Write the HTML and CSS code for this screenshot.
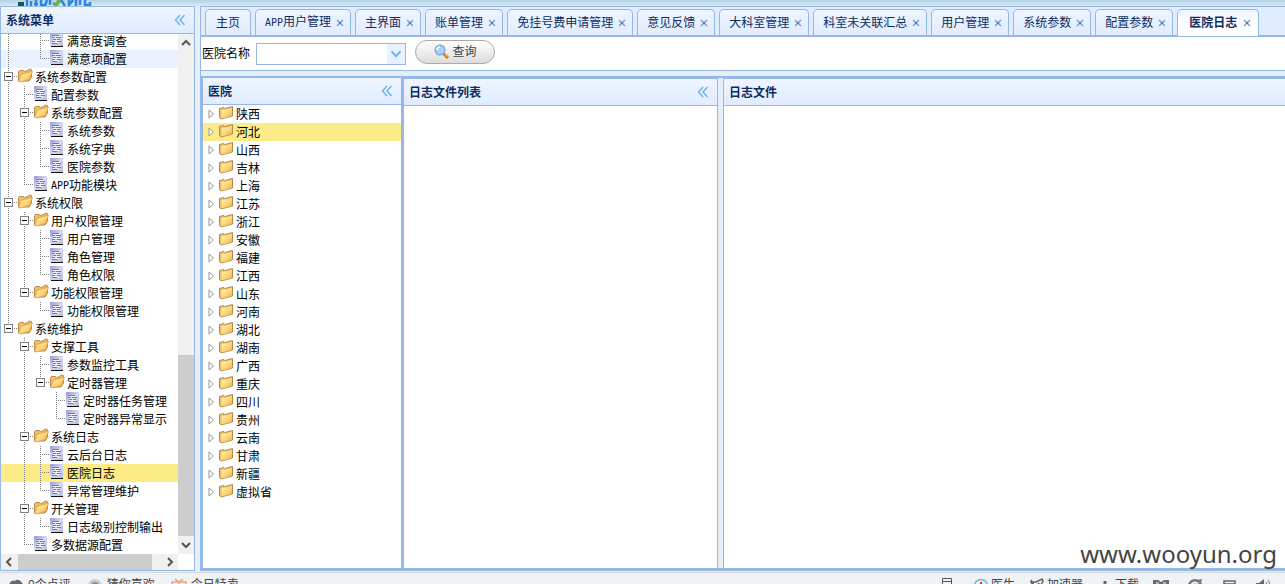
FILE: index.html
```html
<!DOCTYPE html>
<html lang="zh-CN">
<head>
<meta charset="utf-8">
<title>医院日志</title>
<link rel="stylesheet" href="styles.css">
</head>
<body>
<svg class="defs" aria-hidden="true">
  <defs>
    <linearGradient id="gold" x1="0" y1="0" x2="1" y2="1"><stop offset="0" stop-color="#fff2b8"/><stop offset=".5" stop-color="#fcd97c"/><stop offset="1" stop-color="#f2a93a"/></linearGradient>
    <linearGradient id="page" x1="0" y1="0" x2="1" y2="1"><stop offset="0" stop-color="#9a9ad4"/><stop offset=".5" stop-color="#d4d8f0"/><stop offset="1" stop-color="#b8bce0"/></linearGradient>
  </defs>
  <symbol id="open" viewBox="0 0 16 16"><path d="M1.500 13V3.500L2.500 2.500H6L7.500 3.500L11 2.500L12 1L14.500 1.500V9L12 13Z" fill="#f3bd62" stroke="#c08a48"/><path d="M1.500 13.500L4.500 6L7 5.500L15.500 3L12.500 11.500L3 14Z" fill="url(#gold)" stroke="#d39a4c" stroke-width=".7"/></symbol>
  <symbol id="shut" viewBox="0 0 16 16"><path d="M1.500 3.500L6 2.500L7 3.500L14.500 1.500V11L3 14L1.500 12Z" fill="#f3c068" stroke="#b08a55"/><path d="M3.500 5L8 4.500L14 3V11L3.500 13.500Z" fill="url(#gold)"/></symbol>
  <symbol id="doc" viewBox="0 0 13 16"><g shape-rendering="crispEdges"><path d="M0 0H13V14H0Z" fill="url(#page)"/><path d="M1 14H13V15H1Z" fill="#111"/><path d="M2 3.500H9M2 5.500H5M6 5.500H11M3 7.500H6M7 7.500H10M2 9.500H5M7 9.500H11M2 11.500H7" stroke="#7478a4"/><path d="M3 4.500H10M3 6.500H9M3 8.500H10M3 10.500H9" stroke="#f0f2ff"/></g></symbol>
  <symbol id="fold" viewBox="0 0 12 12"><path d="M6 1L1.500 6L6 11M10.500 1L6 6L10.500 11" fill="none" stroke="#6db4ee" stroke-width="1.500"/></symbol>
  <symbol id="x" viewBox="0 0 8 8"><path d="M1 1L7 7M7 1L1 7" stroke="#7f9fce" stroke-width="1.500"/><path d="M3 3H5V5H3Z" fill="#5577b0"/></symbol>
  <symbol id="chev" viewBox="0 0 10 10"><path d="M1 7L5 3L9 7" fill="none" stroke="#555" stroke-width="2"/></symbol>
  <symbol id="tri" viewBox="0 0 7 10"><path d="M1 1L5.500 5L1 9Z" fill="#fff" stroke="#999"/></symbol>
</svg>
<header class="banner">
  <svg class="logo" viewBox="0 0 74 6"><path d="M0 2H6V6H0Z" fill="#24504c"/><path d="M9 0V6M13 1V6M16 4H20M18 0V6M23 0V5H27M29 0L27 6M32 0V5M35 3L39 6" fill="none" stroke="#2b86e4" stroke-width="2.500"/><path d="M37 6L42 0" stroke="#6fb92c" stroke-width="4"/><path d="M43 0L47 6M51 0V6M55 0L52 4M58 0V6M62 0V5M67 0V5H72V2" fill="none" stroke="#2b86e4" stroke-width="2.500"/></svg>
</header>
<div class="desk">
  <aside class="side">
    <div class="head"><h2>系统菜单</h2><button class="ico" aria-label="折叠"><svg><use href="#fold"/></svg></button></div>
    <div class="scroller">
      <nav class="view">
        <ul class="tree">
          <li><ul><li class="above"><ul>
            <li><div class="row leaf"><svg><use href="#doc"/></svg>满意度调查</div></li>
            <li><div class="row leaf hover"><svg><use href="#doc"/></svg>满意项配置</div></li>
          </ul></li></ul></li>
          <li><div class="row"><i></i><svg><use href="#open"/></svg>系统参数配置</div><ul>
            <li><div class="row leaf"><svg><use href="#doc"/></svg>配置参数</div></li>
            <li><div class="row"><i></i><svg><use href="#open"/></svg>系统参数配置</div><ul>
              <li><div class="row leaf"><svg><use href="#doc"/></svg>系统参数</div></li>
              <li><div class="row leaf"><svg><use href="#doc"/></svg>系统字典</div></li>
              <li><div class="row leaf"><svg><use href="#doc"/></svg>医院参数</div></li>
            </ul></li>
            <li><div class="row leaf"><svg><use href="#doc"/></svg><span class="latin">APP</span>功能模块</div></li>
          </ul></li>
          <li><div class="row"><i></i><svg><use href="#open"/></svg>系统权限</div><ul>
            <li><div class="row"><i></i><svg><use href="#open"/></svg>用户权限管理</div><ul>
              <li><div class="row leaf"><svg><use href="#doc"/></svg>用户管理</div></li>
              <li><div class="row leaf"><svg><use href="#doc"/></svg>角色管理</div></li>
              <li><div class="row leaf"><svg><use href="#doc"/></svg>角色权限</div></li>
            </ul></li>
            <li><div class="row"><i></i><svg><use href="#open"/></svg>功能权限管理</div><ul>
              <li><div class="row leaf"><svg><use href="#doc"/></svg>功能权限管理</div></li>
            </ul></li>
          </ul></li>
          <li><div class="row"><i></i><svg><use href="#open"/></svg>系统维护</div><ul>
            <li><div class="row"><i></i><svg><use href="#open"/></svg>支撑工具</div><ul>
              <li><div class="row leaf"><svg><use href="#doc"/></svg>参数监控工具</div></li>
              <li><div class="row"><i></i><svg><use href="#open"/></svg>定时器管理</div><ul>
                <li><div class="row leaf"><svg><use href="#doc"/></svg>定时器任务管理</div></li>
                <li><div class="row leaf"><svg><use href="#doc"/></svg>定时器异常显示</div></li>
              </ul></li>
            </ul></li>
            <li><div class="row"><i></i><svg><use href="#open"/></svg>系统日志</div><ul>
              <li><div class="row leaf"><svg><use href="#doc"/></svg>云后台日志</div></li>
              <li><div class="row leaf picked"><svg><use href="#doc"/></svg>医院日志</div></li>
              <li><div class="row leaf"><svg><use href="#doc"/></svg>异常管理维护</div></li>
            </ul></li>
            <li><div class="row"><i></i><svg><use href="#open"/></svg>开关管理</div><ul>
              <li><div class="row leaf"><svg><use href="#doc"/></svg>日志级别控制输出</div></li>
            </ul></li>
            <li><div class="row leaf"><svg><use href="#doc"/></svg>多数据源配置</div></li>
          </ul></li>
        </ul>
      </nav>
      <div class="vbar"><svg><use href="#chev"/></svg><span class="track"><span class="thumb"></span></span><svg class="down"><use href="#chev"/></svg></div>
      <div class="hbar"><svg class="left"><use href="#chev"/></svg><span class="track"><span class="thumb"></span></span><svg class="right"><use href="#chev"/></svg></div>
    </div>
  </aside>
  <main class="work">
    <div class="tabs" role="tablist">
      <div class="tab"><a href="#">主页</a></div>
      <div class="tab"><a href="#"><span class="latin">APP</span>用户管理</a><button class="x" aria-label="关闭"><svg><use href="#x"/></svg></button></div>
      <div class="tab"><a href="#">主界面</a><button class="x" aria-label="关闭"><svg><use href="#x"/></svg></button></div>
      <div class="tab"><a href="#">账单管理</a><button class="x" aria-label="关闭"><svg><use href="#x"/></svg></button></div>
      <div class="tab"><a href="#">免挂号费申请管理</a><button class="x" aria-label="关闭"><svg><use href="#x"/></svg></button></div>
      <div class="tab"><a href="#">意见反馈</a><button class="x" aria-label="关闭"><svg><use href="#x"/></svg></button></div>
      <div class="tab"><a href="#">大科室管理</a><button class="x" aria-label="关闭"><svg><use href="#x"/></svg></button></div>
      <div class="tab"><a href="#">科室未关联汇总</a><button class="x" aria-label="关闭"><svg><use href="#x"/></svg></button></div>
      <div class="tab"><a href="#">用户管理</a><button class="x" aria-label="关闭"><svg><use href="#x"/></svg></button></div>
      <div class="tab"><a href="#">系统参数</a><button class="x" aria-label="关闭"><svg><use href="#x"/></svg></button></div>
      <div class="tab"><a href="#">配置参数</a><button class="x" aria-label="关闭"><svg><use href="#x"/></svg></button></div>
      <div class="tab on"><a href="#">医院日志</a><button class="x" aria-label="关闭"><svg><use href="#x"/></svg></button></div>
    </div>
    <form class="query">
      <label for="hos">医院名称</label>
      <div class="combo"><input id="hos" type="text"><button type="button" aria-label="展开"><svg viewBox="0 0 12 8"><path d="M1.500 1.500L6 6L10.500 1.500" fill="none" stroke="#6fb5ee" stroke-width="2"/></svg></button></div>
      <button class="go" type="button"><svg viewBox="0 0 16 16"><path d="M9.500 9.500L14 14" stroke="#b9722c" stroke-width="3"/><path d="M10.500 9.500L14.500 13" stroke="#f2b566" stroke-width="1.500"/><circle cx="6" cy="6" r="4.800" fill="#a9d3f8" stroke="#7fa9d6" stroke-width="1.400"/><path d="M3 6A3 3 0 0 1 6 3" fill="none" stroke="#fff" stroke-width="1.500"/></svg>查询</button>
    </form>
    <div class="panes">
      <section class="pane first">
        <div class="head"><h2>医院</h2><button class="ico" aria-label="折叠"><svg><use href="#fold"/></svg></button></div>
        <ul class="places">
          <li><svg class="tri"><use href="#tri"/></svg><svg><use href="#shut"/></svg>陕西</li>
          <li class="picked"><svg class="tri"><use href="#tri"/></svg><svg><use href="#shut"/></svg>河北</li>
          <li><svg class="tri"><use href="#tri"/></svg><svg><use href="#shut"/></svg>山西</li>
          <li><svg class="tri"><use href="#tri"/></svg><svg><use href="#shut"/></svg>吉林</li>
          <li><svg class="tri"><use href="#tri"/></svg><svg><use href="#shut"/></svg>上海</li>
          <li><svg class="tri"><use href="#tri"/></svg><svg><use href="#shut"/></svg>江苏</li>
          <li><svg class="tri"><use href="#tri"/></svg><svg><use href="#shut"/></svg>浙江</li>
          <li><svg class="tri"><use href="#tri"/></svg><svg><use href="#shut"/></svg>安徽</li>
          <li><svg class="tri"><use href="#tri"/></svg><svg><use href="#shut"/></svg>福建</li>
          <li><svg class="tri"><use href="#tri"/></svg><svg><use href="#shut"/></svg>江西</li>
          <li><svg class="tri"><use href="#tri"/></svg><svg><use href="#shut"/></svg>山东</li>
          <li><svg class="tri"><use href="#tri"/></svg><svg><use href="#shut"/></svg>河南</li>
          <li><svg class="tri"><use href="#tri"/></svg><svg><use href="#shut"/></svg>湖北</li>
          <li><svg class="tri"><use href="#tri"/></svg><svg><use href="#shut"/></svg>湖南</li>
          <li><svg class="tri"><use href="#tri"/></svg><svg><use href="#shut"/></svg>广西</li>
          <li><svg class="tri"><use href="#tri"/></svg><svg><use href="#shut"/></svg>重庆</li>
          <li><svg class="tri"><use href="#tri"/></svg><svg><use href="#shut"/></svg>四川</li>
          <li><svg class="tri"><use href="#tri"/></svg><svg><use href="#shut"/></svg>贵州</li>
          <li><svg class="tri"><use href="#tri"/></svg><svg><use href="#shut"/></svg>云南</li>
          <li><svg class="tri"><use href="#tri"/></svg><svg><use href="#shut"/></svg>甘肃</li>
          <li><svg class="tri"><use href="#tri"/></svg><svg><use href="#shut"/></svg>新疆</li>
          <li><svg class="tri"><use href="#tri"/></svg><svg><use href="#shut"/></svg>虚拟省</li>
        </ul>
      </section>
      <section class="pane list"><div class="head"><h2>日志文件列表</h2><button class="ico" aria-label="折叠"><svg><use href="#fold"/></svg></button></div></section>
      <section class="pane file"><div class="head"><h2>日志文件</h2></div></section>
    </div>
  </main>
</div>
<footer class="status">
  <span class="item"><svg viewBox="0 0 16 16"><path d="M1 10C0 4 5 1 7 3C9 0 15 3 15 8C15 15 3 16 1 10Z" fill="#666b70"/></svg>0个点评</span>
  <span class="item"><svg viewBox="0 0 16 16"><circle cx="8" cy="8" r="7" fill="#ccc"/><circle cx="8" cy="8" r="4" fill="#888"/></svg>猜你喜欢</span>
  <span class="item"><svg viewBox="0 0 16 16"><path d="M1 4H15V8H1ZM2 8V15H14V8M8 4V15M8 4L4 1M8 4L12 1" fill="none" stroke="#f2a07c" stroke-width="1.500"/></svg>今日特卖</span>
  <span class="right">
    <svg viewBox="0 0 16 16"><path d="M3.500 .500H12.500V15H3.500ZM3 3.500H13" fill="none" stroke="#555"/></svg>
    <span class="item"><svg viewBox="0 0 16 16"><circle cx="8" cy="8" r="6.500" fill="#e5f2fb" stroke="#7db6dc" stroke-width="1.500"/><path d="M8 4V12M5 7H11" stroke="#d33" stroke-width="2"/></svg>医生</span>
    <span class="item"><svg viewBox="0 0 16 16"><path d="M2 4H7L13 1L14 3L11 9V14L6 11ZM2 2L5 7M9 5L11 7" fill="none" stroke="#666" stroke-width="1.500"/></svg>加速器</span>
    <span class="item"><svg viewBox="0 0 16 16"><path d="M8 3V12M4 9L8 13L12 9" fill="none" stroke="#666" stroke-width="3"/></svg>下载</span>
    <svg viewBox="0 0 16 16"><path d="M0 2H5L8 4L11 2H16V12H0Z" fill="#666b70"/><path d="M3 5H6M10 5H13" stroke="#fff"/></svg>
    <svg viewBox="0 0 16 16"><path d="M2 10A6 6 0 0 1 14 7H6" fill="none" stroke="#777" stroke-width="2.500"/><path d="M10 2L15 1L14 5" fill="#777"/></svg>
    <svg viewBox="0 0 16 16"><path d="M3 3H14V12H3ZM3 6H14" fill="none" stroke="#666" stroke-width="1.500"/></svg>
    <svg viewBox="0 0 16 16"><path d="M1 5H4L9 1V15L4 11H1Z" fill="#666"/><path d="M11 4Q14 8 11 12M13 2Q17 8 13 14" fill="none" stroke="#777"/></svg>
  </span>
</footer>
<div class="watermark">www.wooyun.org</div>
</body>
</html>
```
FILE: styles.css
```css
* { box-sizing: border-box; }
body {
  margin: 0;
  height: 100vh;
  display: flex;
  flex-direction: column;
  overflow: hidden;
  position: relative;
  background: #e6eef8;
  color: #000;
  font: 12px/18px "Liberation Sans", "Noto Sans CJK SC", sans-serif;
}
ul { list-style: none; margin: 0; padding: 0; }
button { font: inherit; border: 0; padding: 0; background: none; }
svg { display: block; flex: none; }
.defs { width: 0; height: 0; position: absolute; }
.latin { font-family: "DejaVu Sans Mono", monospace; font-size: 10px; }

.banner {
  flex: none;
  height: 6px;
  padding-left: 18px;
  background: linear-gradient(#b3d3e6, #d9eaf1);
}
.logo { width: 74px; height: 6px; }

.desk { flex: 1; min-height: 0; display: flex; gap: 5px; }
.head {
  flex: none;
  height: 27px;
  display: flex;
  align-items: center;
  justify-content: space-between;
  padding: 0 8px 0 5px;
  border-bottom: 1px solid #95b8e7;
  background: linear-gradient(#eff5ff, #e0ecff);
}
.head h2 { margin: 0; padding-top: 2px; font-size: 12px; line-height: 18px; color: #0e2d5f; }
.ico svg { width: 12px; height: 12px; }

.side {
  flex: none;
  width: 195px;
  display: flex;
  flex-direction: column;
  border: 1px solid #95b8e7;
  background: #fff;
}
.scroller { flex: 1; min-height: 0; display: grid; grid-template: 1fr 16px / 1fr 16px; }
.view { overflow: hidden; min-height: 0; display: flex; flex-direction: column; justify-content: flex-end; }
.tree { flex: none; }
.tree li {
  background:
    repeating-linear-gradient(#808080 0 1px, transparent 1px 2px) 7px 0 / 1px 100% no-repeat;
}
.tree li:last-child { background-size: 1px 9px; }
.tree li.above { background: none; }
.tree ul { padding-left: 16px; }
.row { height: 18px; display: flex; align-items: flex-start; white-space: nowrap; line-height: 20px; padding-left: 3px;
  background: repeating-linear-gradient(90deg, #808080 0 1px, transparent 1px 2px) 7px 8px / 9px 1px no-repeat; }
.row svg { width: 16px; height: 16px; margin-right: 2px; }
.row i { width: 9px; height: 9px; margin: 4px 4px 0 0; border: 1px solid #808080;
  background: linear-gradient(#000, #000) center / 5px 1px no-repeat #fff; }
.leaf { padding-left: 17px; }
.leaf svg { width: 13px; height: 16px; margin-right: 4px; }
.hover, .row.picked { margin-left: -32px; padding-left: 49px; }
.hover { background:
    repeating-linear-gradient(90deg, #808080 0 1px, transparent 1px 2px) 39px 8px / 9px 1px no-repeat,
    repeating-linear-gradient(#808080 0 1px, transparent 1px 2px) 39px 0 / 1px 9px no-repeat,
    repeating-linear-gradient(#808080 0 1px, transparent 1px 2px) 7px 0 / 1px 18px no-repeat, #eaf2ff; }
.row.picked { background:
    repeating-linear-gradient(90deg, #808080 0 1px, transparent 1px 2px) 39px 8px / 9px 1px no-repeat,
    repeating-linear-gradient(#808080 0 1px, transparent 1px 2px) 39px 0 / 1px 18px no-repeat,
    repeating-linear-gradient(#808080 0 1px, transparent 1px 2px) 23px 0 / 1px 18px no-repeat, #fbec88; }
.picked { background: #fbec88; }

.vbar, .hbar { display: flex; align-items: center; background: #f0f0f0; }
.vbar { flex-direction: column; padding: 4px 0; }
.hbar { padding: 0 3px; }
.vbar svg, .hbar svg { width: 10px; height: 10px; }
.track { flex: 1; display: flex; align-self: stretch; }
.vbar .track { flex-direction: column; justify-content: flex-end; padding-bottom: 4px; }
.hbar .track { padding-left: 4px; }
.vbar .thumb { height: 37%; background: #cdcdcd; }
.hbar .thumb { width: 91%; background: #cdcdcd; }
.down { transform: rotate(180deg); }
.left { transform: rotate(-90deg); }
.hbar .right { transform: rotate(90deg); }

.work { flex: 1; min-width: 0; display: flex; flex-direction: column; border: 1px solid #95b8e7; border-right: 0; border-bottom: 0; }
.tabs {
  flex: none;
  height: 30px;
  display: flex;
  gap: 4px;
  padding: 2px 0 0 4px;
  background: #e0ecff;
  border-bottom: 2px solid #95b8e7;
}
.tab {
  flex: none;
  height: 26px;
  display: flex;
  align-items: center;
  gap: 5px;
  padding: 0 6px 0 9px;
  border: 1px solid #95b8e7;
  border-bottom: 0;
  border-radius: 5px 5px 0 0;
  background: linear-gradient(#eff5ff, #e0ecff);
}
.tab:first-child { padding: 0 10px; }
.tab a { color: #0e2d5f; text-decoration: none; white-space: nowrap; line-height: 20px; }
.tab svg { width: 8px; height: 8px; }
.tab.on { height: 27px; padding: 0 7px 0 11px; gap: 6px; background: linear-gradient(#eff5ff, #fff 60%); font-weight: 700; }

.query { flex: none; height: 34px; display: flex; align-items: center; padding-left: 1px; background: #fff; border-bottom: 1px solid #95b8e7; }
.combo { width: 150px; height: 22px; margin: 0 9px 0 6px; display: flex; border: 1px solid #95b8e7; }
.combo input { flex: 1; min-width: 0; border: 0; padding: 0 3px; outline: 0; font: inherit; }
.combo button { width: 18px; display: flex; align-items: center; justify-content: center; background: #e8f1ff; }
.combo svg { width: 12px; height: 8px; }
.go {
  width: 80px;
  height: 24px;
  margin-bottom: 4px;
  display: flex;
  align-items: center;
  justify-content: center;
  gap: 3px;
  border: 1px solid #aaa;
  border-radius: 12px;
  background: linear-gradient(#fff, #dcdcdc);
  color: #444;
}
.go svg { width: 16px; height: 16px; }

.panes { flex: 1; min-height: 0; display: flex; margin-top: 5px; border: solid #95b8e7; border-width: 2px 0 3px 1px; }
.pane { display: flex; flex-direction: column; background: #fff; overflow: hidden; }
.first { flex: none; width: 202px; border: solid #95b8e7; border-width: 0 3px 0 1px; }
.list { flex: none; width: 314px; border: solid #95b8e7; border-width: 1px 1px 0 0; }
.file { flex: 1; margin-left: 5px; border: solid #95b8e7; border-width: 1px 0 0 1px; }
.places li { height: 18px; display: flex; align-items: flex-start; line-height: 20px; padding-left: 5px; }
.places svg { width: 16px; height: 16px; margin-right: 2px; }
.places .tri { width: 7px; height: 10px; margin: 4px 3px 0 0; }

.status {
  flex: none;
  height: 12px;
  margin-top: 1px;
  padding: 1px 14px 0 8px;
  overflow: hidden;
  display: flex;
  align-items: flex-start;
  gap: 16px;
  background: #f0f3f5;
  border-top: 1px solid #d5d9dd;
  color: #444;
}
.item, .status .right { display: flex; align-items: flex-start; white-space: nowrap; }
.item { gap: 4px; line-height: 22px; }
.status svg { width: 16px; height: 16px; margin-top: 4px; }
.status .right { margin-left: auto; gap: 14px; }
.right .item { gap: 2px; }
.right svg + svg { margin-left: 4px; }
.right svg:first-child:not(.item svg) { margin-right: 4px; }

.watermark {
  position: absolute;
  right: 8px;
  bottom: 13px;
  color: #444;
  font: 24px/34px "Noto Sans", sans-serif;
}
```
